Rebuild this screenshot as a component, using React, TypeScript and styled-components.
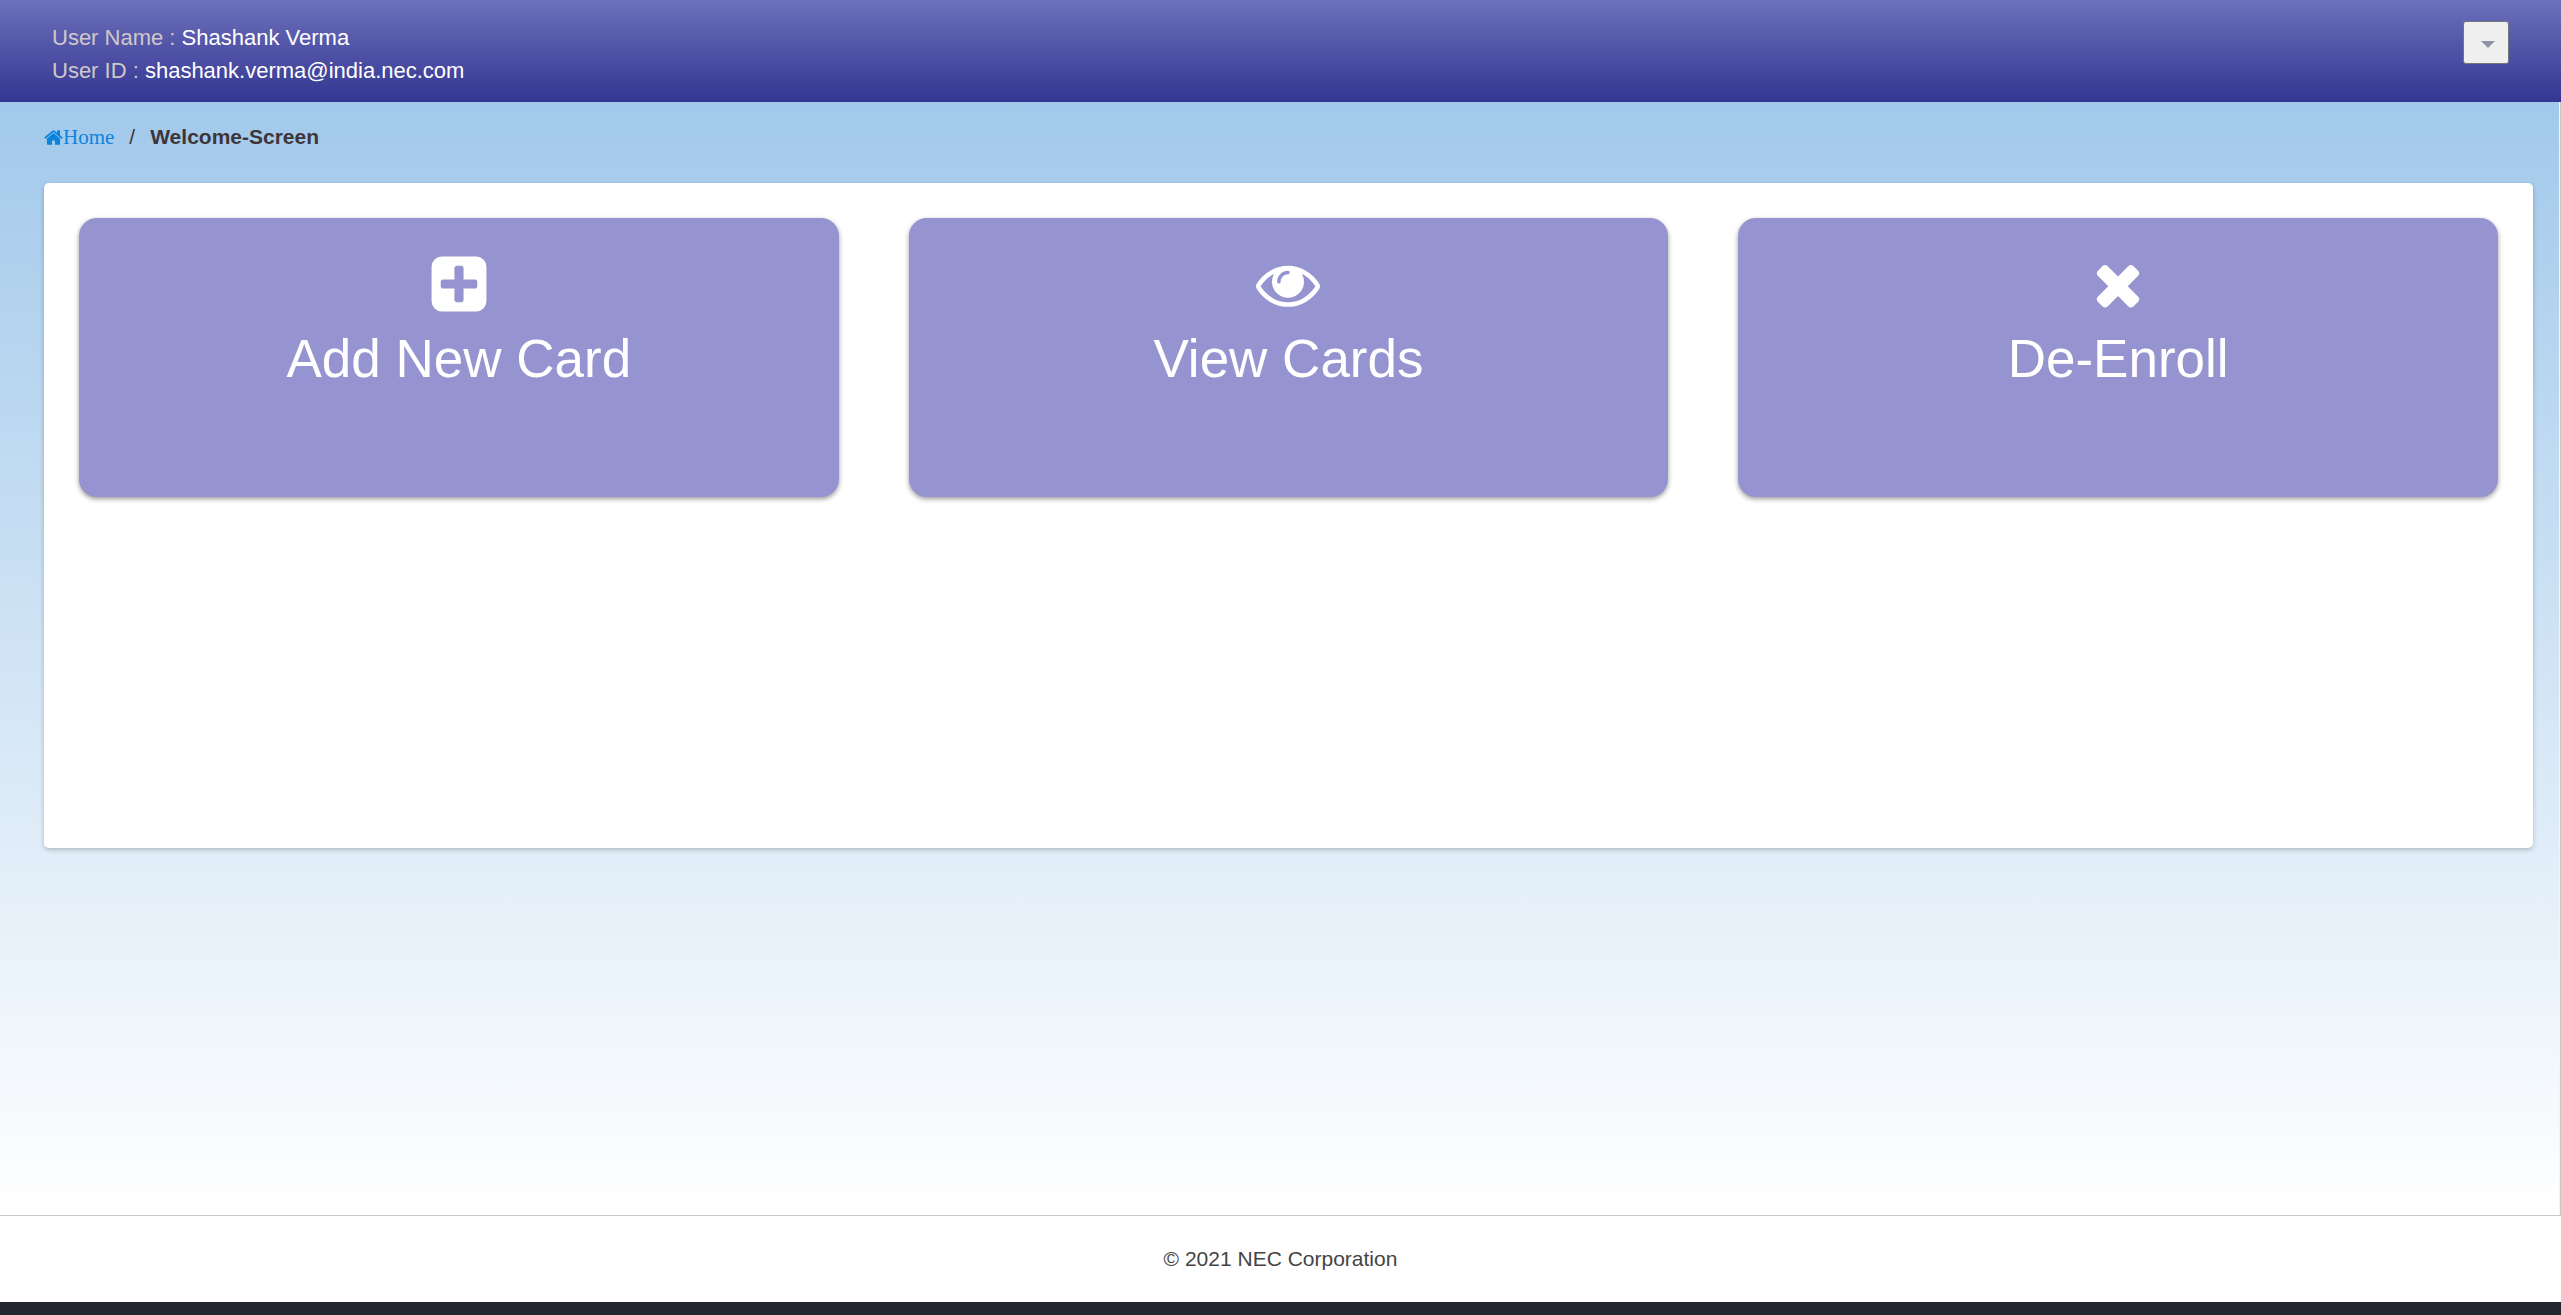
import React from 'react';
import styled, { createGlobalStyle } from 'styled-components';

const Global = createGlobalStyle`
  * { box-sizing: border-box; }
  body { margin: 0; background: #22262f; font-family: "Liberation Sans", Arial, sans-serif; }
`;
const Page = styled.div`
  min-height: 100vh;
  display: flex;
  flex-direction: column;
  padding-bottom: 13px;
`;
const Header = styled.header`
  display: flex;
  justify-content: space-between;
  align-items: flex-start;
  padding: 21px 52px 15px;
  background: linear-gradient(#6d70bb, #333690);
`;
const UserLine = styled.p`
  margin: 0;
  color: #d0c8c8;
  font-size: 22px;
  line-height: 33px;
`;
const UserValue = styled.span`
  color: #fff;
`;
const MenuButton = styled.button`
  display: grid;
  place-items: center;
  width: 46px;
  height: 43px;
  padding: 3px 0 0 4px;
  border: 1px solid #767676;
  border-radius: 3px;
  background: #efefef;
`;
const Main = styled.main`
  flex: 1;
  padding: 18px 27px 0 44px;
  border-right: 1px solid #c8c8c8;
  box-shadow: inset -1px 0 #f4f4f4;
  background: linear-gradient(#a2c9eb, #fff);
`;
const Crumbs = styled.nav`
  display: flex;
  align-items: center;
  gap: 15px;
  height: 34px;
  color: #3d3539;
  font-size: 21px;
`;
const HomeLink = styled.a`
  display: flex;
  align-items: center;
  color: #0c84dc;
  font-family: "Liberation Serif", "Times New Roman", serif;
  text-decoration: none;
`;
const Panel = styled.section`
  display: grid;
  grid-template-columns: repeat(3, 1fr);
  align-items: start;
  gap: 70px;
  min-height: 665px;
  margin-top: 29px;
  padding: 35px;
  border-radius: 5px;
  background: #fff;
  box-shadow: 0 2px 5px rgba(0, 0, 0, 0.22);
`;
const Card = styled.button`
  display: flex;
  flex-direction: column;
  align-items: center;
  height: 279px;
  padding: 34px 16px;
  border: 0;
  border-radius: 18px;
  background: #9694d0;
  color: #fff;
  font-family: inherit;
  font-size: 53px;
  line-height: 62px;
  box-shadow: 0 2px 5px rgba(0, 0, 0, 0.4);
`;
const CardIcon = styled.svg`
  width: 64px;
  height: 64px;
  margin-bottom: 12px;
  fill: currentColor;
`;
const HomeIcon = styled.svg`
  width: 19px;
  height: 21px;
  fill: currentColor;
`;
const Footer = styled.footer`
  padding: 28px;
  border-top: 1px solid #c8c8c8;
  background: #fff;
  color: #444;
  font-size: 21px;
  line-height: 30px;
  text-align: center;
`;

const actions = [
  {
    label: 'Add New Card',
    path: 'M1408 960v-128q0-26-19-45t-45-19h-320v-320q0-26-19-45t-45-19h-128q-26 0-45 19t-19 45v320h-320q-26 0-45 19t-19 45v128q0 26 19 45t45 19h320v320q0 26 19 45t45 19h128q26 0 45-19t19-45v-320h320q26 0 45-19t19-45zm256-544v960q0 119-84.5 203.5t-203.5 84.5h-960q-119 0-203.5-84.5t-84.5-203.5v-960q0-119 84.5-203.5t203.5-84.5h960q119 0 203.5 84.5t84.5 203.5z',
  },
  {
    label: 'View Cards',
    path: 'M1664 960q-152-236-381-353 61 104 61 225 0 185-131.5 316.5t-316.5 131.5-316.5-131.5-131.5-316.5q0-121 61-225-229 117-381 353 133 205 333.5 326.5t434.5 121.5 434.5-121.5 333.5-326.5zm-720-384q0-20-14-34t-34-14q-125 0-214.5 89.5t-89.5 214.5q0 20 14 34t34 14 34-14 14-34q0-86 61-147t147-61q20 0 34-14t14-34zm848 384q0 34-20 69-140 230-376.5 368.5t-499.5 138.5-499.5-139-376.5-368q-20-35-20-69t20-69q140-229 376.5-368t499.5-139 499.5 139 376.5 368q20 35 20 69z',
  },
  {
    label: 'De-Enroll',
    path: 'M1490 1322q0 40-28 68l-136 136q-28 28-68 28t-68-28l-294-294-294 294q-28 28-68 28t-68-28l-136-136q-28-28-28-68t28-68l294-294-294-294q-28-28-28-68t28-68l136-136q28-28 68-28t68 28l294 294 294-294q28-28 68-28t68 28l136 136q28 28 28 68t-28 68l-294 294 294 294q28 28 28 68z',
  },
];

export default function App() {
  return (
    <Page>
      <Global />
      <Header>
        <div>
          <UserLine>User Name : <UserValue>Shashank Verma</UserValue></UserLine>
          <UserLine>User ID : <UserValue>shashank.verma@india.nec.com</UserValue></UserLine>
        </div>
        <MenuButton aria-label="Account menu">
          <svg width="14" height="7" viewBox="0 0 14 7"><path d="M0 0h14L7 7z" fill="#8d93a5" /></svg>
        </MenuButton>
      </Header>
      <Main>
        <Crumbs aria-label="Breadcrumb">
          <HomeLink href="#">
            <HomeIcon viewBox="64 0 1664 1792" aria-hidden="true">
              <path d="M1472 992v480q0 26-19 45t-45 19h-384v-384h-256v384h-384q-26 0-45-19t-19-45v-480q0-1 .5-3t.5-3l575-474 575 474q1 2 1 6zm223-69l-62 74q-8 9-21 11h-3q-13 0-21-7l-692-577-692 577q-12 8-24 7-13-2-21-11l-62-74q-8-10-7-23.5t11-21.5l719-599q32-26 76-26t76 26l244 204v-195q0-14 9-23t23-9h192q14 0 23 9t9 23v408l219 182q10 8 11 21.5t-7 23.5z" />
            </HomeIcon>
            Home
          </HomeLink>
          <span>/</span>
          <strong>Welcome-Screen</strong>
        </Crumbs>
        <Panel>
          {actions.map(({ label, path }) => (
            <Card key={label}>
              <CardIcon viewBox="0 0 1792 1792" aria-hidden="true"><path d={path} /></CardIcon>
              {label}
            </Card>
          ))}
        </Panel>
      </Main>
      <Footer>© 2021 NEC Corporation</Footer>
    </Page>
  );
}
